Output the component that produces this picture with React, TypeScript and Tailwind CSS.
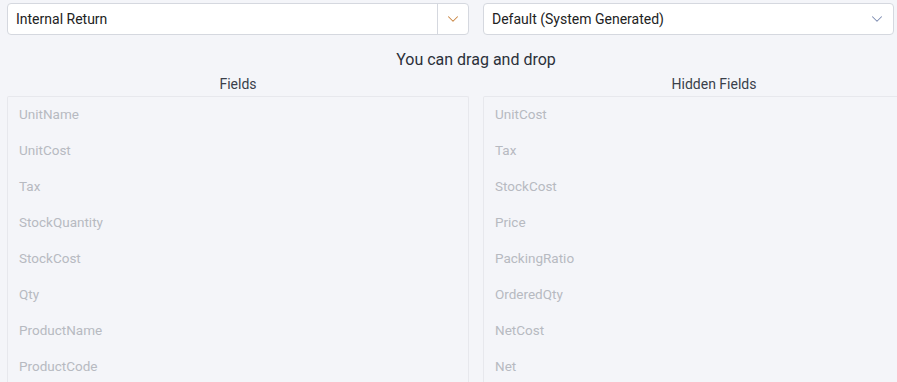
import { ChevronDown } from "lucide-react";

const fields = ["UnitName", "UnitCost", "Tax", "StockQuantity", "StockCost", "Qty", "ProductName", "ProductCode"];
const hidden = ["UnitCost", "Tax", "StockCost", "Price", "PackingRatio", "OrderedQty", "NetCost", "Net"];

const FieldList = ({ title, items }: { title: string; items: string[] }) => (
    <div className="flex flex-col w-[462px] shrink-0">
        <div className="h-[24px] text-center text-[14px] leading-[24px] text-[#3a3f4a]">{title}</div>
        <div className="h-[300px] border border-[#e7e8ed] border-b-0 rounded-t-[2px]">
            {items.map((item) => (
                <div key={item} className="h-[36px] pl-[11px] pb-[2px] flex items-center text-[13.5px] text-[#b7bac1]">
                    {item}
                </div>
            ))}
        </div>
    </div>
);

export default function App() {
    return (
        <div className="w-[897px] h-[382px] overflow-hidden bg-[#f4f5f9] font-['Roboto',sans-serif]">
            <div className="w-[952px] pl-[7px] pt-[3px]">
                <div className="flex gap-[14px]">
                    <div className="w-[462px] h-[32px] flex bg-white border border-[#d5d8df] rounded-[4px]">
                        <div className="flex-1 flex items-center pl-[8px] text-[14px] text-[#222]">Internal Return</div>
                        <div className="w-[31px] border-l border-[#d5d8df] flex items-center justify-center">
                            <ChevronDown size={18} strokeWidth={1.4} className="text-[#c9843f]" />
                        </div>
                    </div>
                    <div className="w-[411px] h-[32px] flex items-center justify-between bg-white border border-[#d5d8df] rounded-[4px] pl-[8px] pr-[7px]">
                        <span className="text-[14px] text-[#222]">Default (System Generated)</span>
                        <ChevronDown size={18} strokeWidth={1.4} className="text-[#7b8ab0]" />
                    </div>
                </div>
                <div className="w-[938px] text-center text-[16px] text-[#2b303a] mt-[15px] leading-[20px]">
                    You can drag and drop
                </div>
                <div className="flex gap-[14px] mt-[2px]">
                    <FieldList title="Fields" items={fields} />
                    <FieldList title="Hidden Fields" items={hidden} />
                </div>
            </div>
        </div>
    );
}
